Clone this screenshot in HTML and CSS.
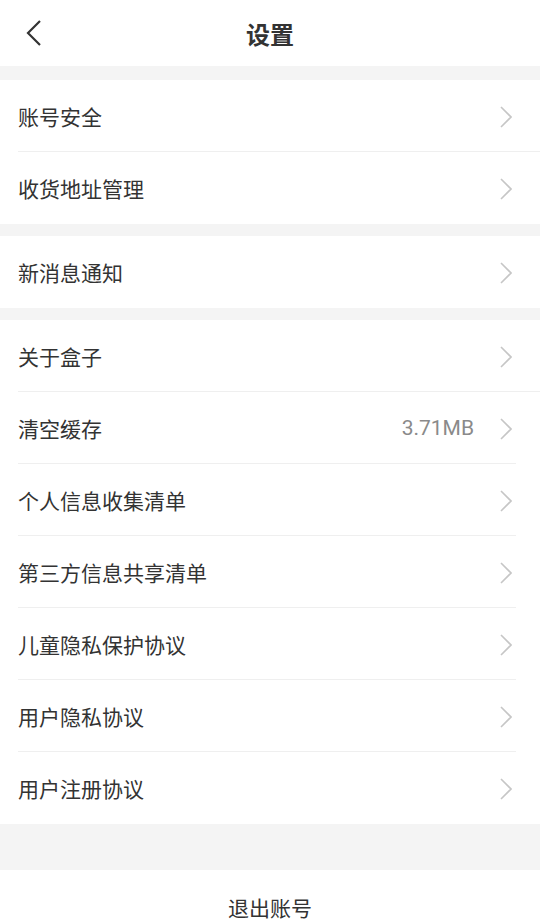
FILE: index.html
```html
<!doctype html>
<html>
  <head>
    <meta charset="utf-8" />
    <title>设置</title>
    <link rel="stylesheet" href="styles.css">
  </head>

  <body>
    <div class="header">
      <span class="back">
        <svg width="18" height="28" viewBox="0 0 18 28">
          <path d="M15 2 L3 14 L15 26" fill="none" stroke="#333" stroke-width="2.2" />
        </svg>
      </span>
      <h1>设置</h1>
    </div>

    <div class="group group-first">
      <div class="row row-full"><span class="label">账号安全</span><span class="chev"></span></div>
      <div class="row"><span class="label">收货地址管理</span><span class="chev"></span></div>
    </div>

    <div class="group">
      <div class="row"><span class="label">新消息通知</span><span class="chev"></span></div>
    </div>

    <div class="group">
      <div class="row row-full"><span class="label">关于盒子</span><span class="chev"></span></div>
      <div class="row">
        <span class="label">清空缓存</span>
        <span class="value">3.71MB</span>
        <span class="chev"></span>
      </div>
      <div class="row"><span class="label">个人信息收集清单</span><span class="chev"></span></div>
      <div class="row"><span class="label">第三方信息共享清单</span><span class="chev"></span></div>
      <div class="row"><span class="label">儿童隐私保护协议</span><span class="chev"></span></div>
      <div class="row"><span class="label">用户隐私协议</span><span class="chev"></span></div>
      <div class="row"><span class="label">用户注册协议</span><span class="chev"></span></div>
    </div>

    <div class="logout">退出账号</div>

    <svg width="0" height="0" style="position: absolute">
      <defs>
        <symbol id="chev" viewBox="0 0 12 22">
          <path d="M1 1 L11 11 L1 21" fill="none" stroke="#c6c6c6" stroke-width="1.6" />
        </symbol>
      </defs>
    </svg>
    <script>
      // fill in the chevrons
      document.querySelectorAll(".chev").forEach(function (el) {
        el.innerHTML =
          '<svg width="12" height="22" viewBox="0 0 12 22"><use href="#chev"/></svg>';
      });
    </script>
  </body>
</html>
```

FILE: styles.css
```css
body {
  margin: 0;
  background-color: #f4f4f4;
  font-family: Roboto, "Noto Sans CJK SC", sans-serif;
  color: #333;
  overflow: hidden;
}

.header {
  height: 66px;
  background-color: #fff;
  display: flex;
  align-items: center;
  justify-content: center;
  position: relative;
}

.back {
  position: absolute;
  left: 25px;
  top: 19px;
  display: flex;
}

.header h1 {
  margin: 0;
  font-size: 24px;
  font-weight: bold;
  color: #333;
}

.group {
  margin-top: 12px;
  background-color: #fff;
}

.group-first {
  margin-top: 14px;
}

.row {
  height: 72px;
  display: flex;
  align-items: center;
  padding: 0 28px 0 18px;
  position: relative;
}

.row::after {
  content: "";
  position: absolute;
  left: 18px;
  right: 24px;
  bottom: 0;
  height: 1px;
  background-color: #efefef;
}

.row-full::after {
  right: 0;
}

.row:last-child::after {
  display: none;
}

.label {
  flex: 1;
  font-size: 21px;
}

.value {
  font-size: 21px;
  color: #8a8a8a;
  margin-right: 26px;
}

.chev {
  display: flex;
  padding-top: 2px;
}

.logout {
  margin-top: 46px;
  background-color: #fff;
  height: 74px;
  display: flex;
  align-items: center;
  justify-content: center;
  font-size: 21px;
}
```
